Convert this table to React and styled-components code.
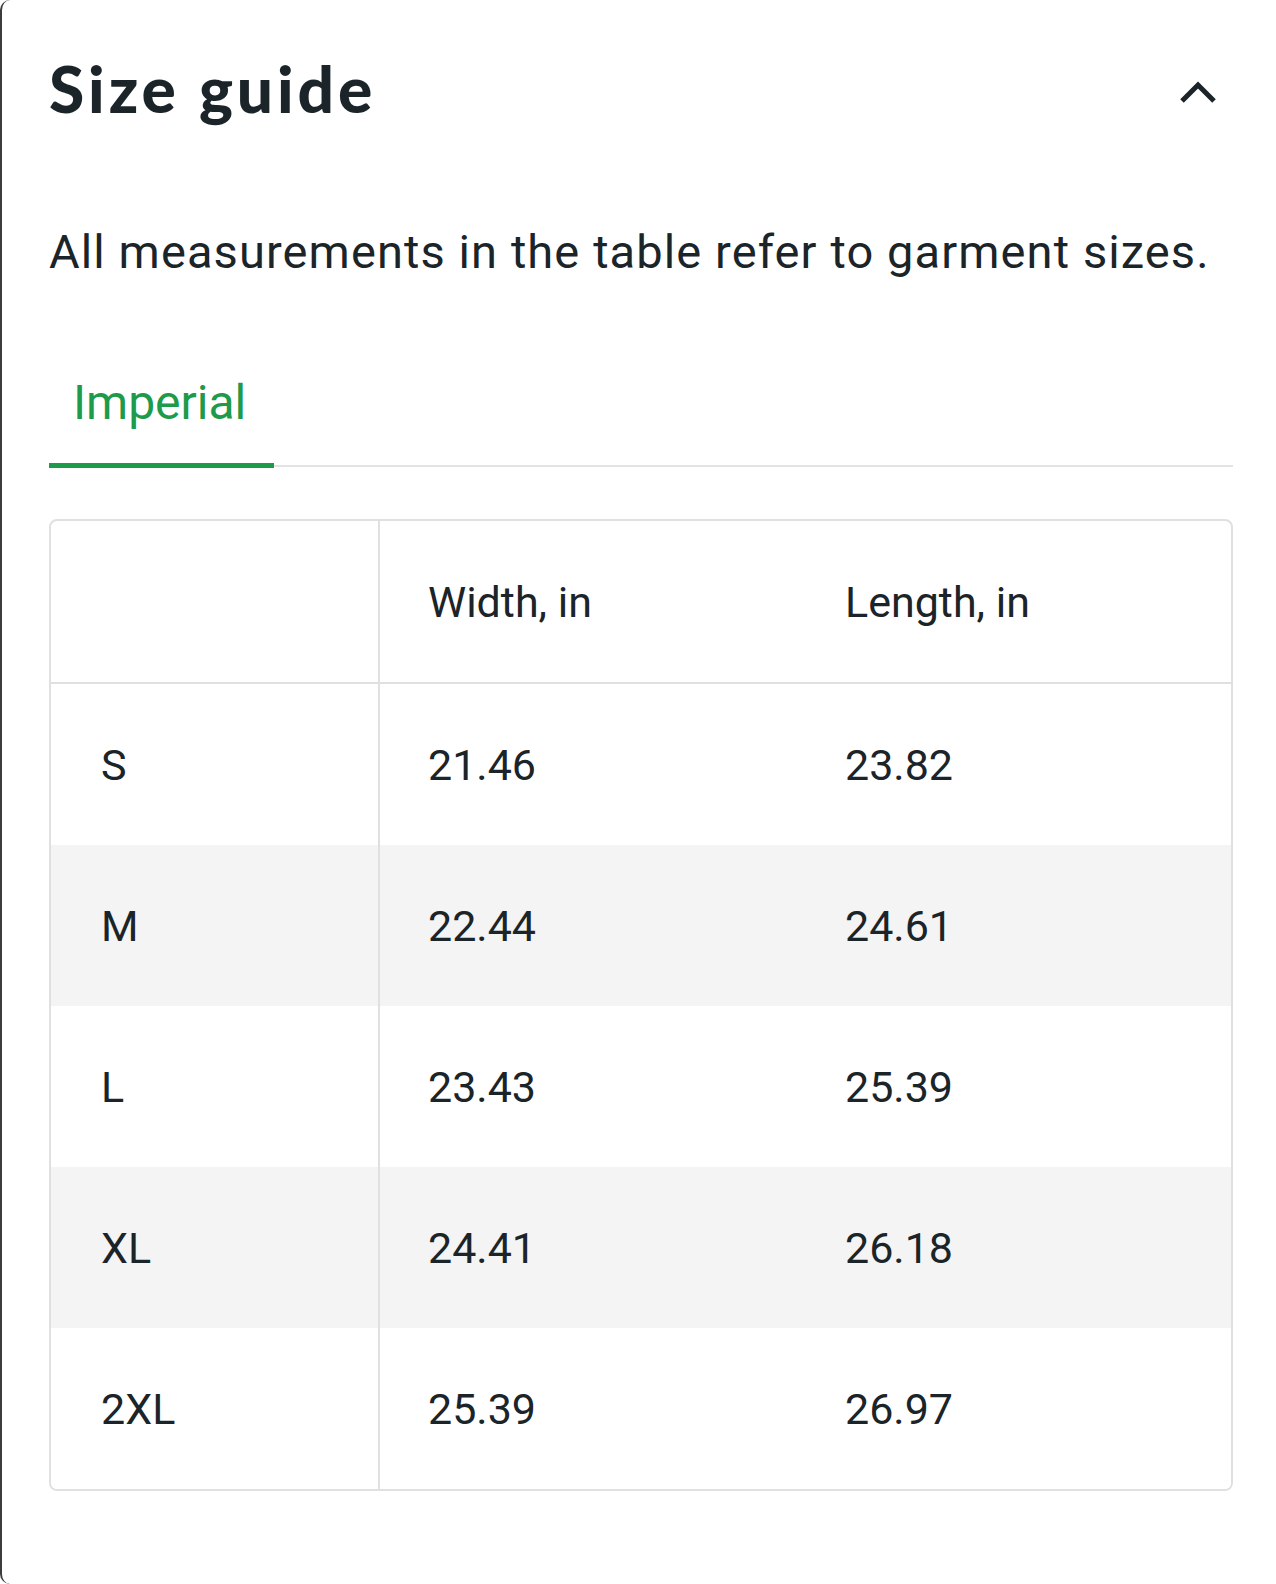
import React from 'react';
import styled, { createGlobalStyle } from 'styled-components';

const GlobalStyle = createGlobalStyle`
  html, body {
    margin: 0;
    padding: 0;
    background: #ffffff;
  }
  body {
    font-family: Roboto, "Liberation Sans", sans-serif;
    color: #1b2428;
  }
`;

// Sheet wrapper (the left edge shows the dark frame behind the sheet)
const Sheet = styled.div`
  box-sizing: border-box;
  min-height: 1584px;
  border-left: 2px solid #3c3c3c;
  border-radius: 10px 0 0 10px;
  padding: 0 43px 0 47px;
  background: #ffffff;
`;

const Header = styled.div`
  display: flex;
  align-items: center;
  justify-content: space-between;
  padding-top: 57px;
`;

const Title = styled.h1`
  margin: 0;
  font-family: Lato, "Open Sans", sans-serif;
  font-weight: 900;
  font-size: 64px;
  line-height: 1;
  letter-spacing: 3.9px;
  color: #1b2428;
`;

const Toggle = styled.button`
  display: flex;
  align-items: center;
  justify-content: center;
  padding: 6px 0 0;
  margin-right: 16px;
  border: 0;
  background: none;
  color: #1b2428;
  cursor: pointer;
`;

const Intro = styled.p`
  margin: 103px 0 0;
  font-size: 47px;
  line-height: 55px;
  letter-spacing: 1.1px;
  color: #1b2428;
`;

const Tabs = styled.div`
  display: flex;
  margin-top: 94px;
  border-bottom: 2px solid #e3e3e3;
`;

const Tab = styled.div`
  padding: 0 28px 30px 24px;
  margin-bottom: -3px;
  font-size: 48px;
  line-height: 60px;
  color: ${(p) => (p.$active ? '#1e9a4b' : '#6b7478')};
  border-bottom: 5px solid ${(p) => (p.$active ? '#1e9a4b' : 'transparent')};
`;

const Table = styled.table`
  width: 100%;
  margin-top: 52px;
  border-collapse: separate;
  border-spacing: 0;
  border: 2px solid #e0e0e0;
  border-radius: 8px;
  overflow: hidden;
  table-layout: fixed;
`;

const Col = styled.col`
  width: ${(p) => p.$w};
`;

const Row = styled.tr`
  background: ${(p) => (p.$striped ? '#f4f4f4' : '#ffffff')};
`;

const HeadCell = styled.th`
  height: 161px;
  padding: 0 0 0 48px;
  text-align: left;
  font-weight: 400;
  font-size: 43px;
  color: #1b2428;
  border-bottom: 2px solid #e0e0e0;
  &:first-child {
    border-right: 2px solid #e0e0e0;
  }
`;

const Cell = styled.td`
  height: 161px;
  padding: 0 0 0 48px;
  font-size: 43px;
  color: #1b2428;
  &:first-child {
    padding-left: 50px;
    border-right: 2px solid #e0e0e0;
  }
`;

const sizes = [
  { size: 'S', width: '21.46', length: '23.82' },
  { size: 'M', width: '22.44', length: '24.61' },
  { size: 'L', width: '23.43', length: '25.39' },
  { size: 'XL', width: '24.41', length: '26.18' },
  { size: '2XL', width: '25.39', length: '26.97' },
];

function ChevronUp() {
  return (
    <svg width="38" height="26" viewBox="0 0 38 26" fill="none">
      <polyline points="3,22 19,6 35,22" stroke="currentColor" strokeWidth="5" />
    </svg>
  );
}

export default function App() {
  return (
    <>
      <GlobalStyle />
      <Sheet>
        <Header>
          <Title>Size guide</Title>
          <Toggle aria-label="Collapse">
            <ChevronUp />
          </Toggle>
        </Header>
        <Intro>All measurements in the table refer to garment sizes.</Intro>
        <Tabs>
          <Tab $active>Imperial</Tab>
        </Tabs>
        <Table>
          <colgroup>
            <Col $w="329px" />
            <Col $w="417px" />
            <Col $w="auto" />
          </colgroup>
          <thead>
            <tr>
              <HeadCell />
              <HeadCell>Width, in</HeadCell>
              <HeadCell>Length, in</HeadCell>
            </tr>
          </thead>
          <tbody>
            {sizes.map((s, i) => (
              <Row key={s.size} $striped={i % 2 === 1}>
                <Cell>{s.size}</Cell>
                <Cell>{s.width}</Cell>
                <Cell>{s.length}</Cell>
              </Row>
            ))}
          </tbody>
        </Table>
      </Sheet>
    </>
  );
}
